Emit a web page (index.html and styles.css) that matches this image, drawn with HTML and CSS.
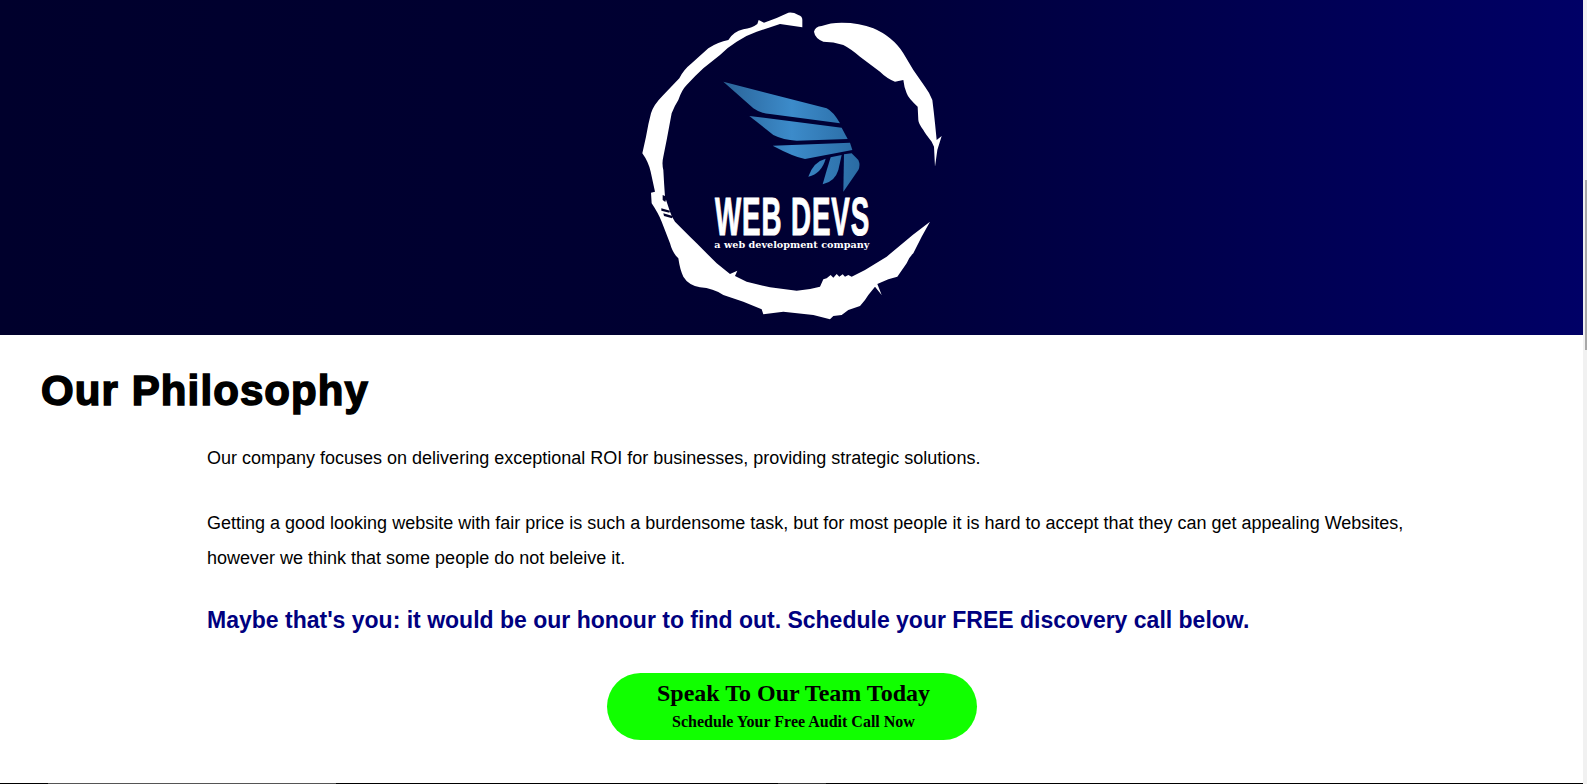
FILE: index.html
```html
<!DOCTYPE html>
<html>
<head>
  <title>Web Devs: Our Philosophy</title>
  <meta charset="UTF-8">
  <link rel="stylesheet" href="styles.css">
</head>
<body>
  <div id="page">
    <header class="hero">
      <svg class="logo" viewBox="0 0 1020 1020" width="340" height="340">
        <defs>
          <linearGradient id="wingFill" x1="310" y1="0" x2="720" y2="0" gradientUnits="userSpaceOnUse">
            <stop offset="0" stop-color="#2a6398"/>
            <stop offset="0.5" stop-color="#3c8bca"/>
            <stop offset="1" stop-color="#2a6ba3"/>
          </linearGradient>
        </defs>
        <path class="ring" d="M547 62Q548 48 535 45Q520 36 505 38L470 54L432 68L416 60L412 72Q395 85 370 88Q340 95 325 120Q295 125 265 145L215 190Q190 210 178 235L130 285Q100 315 93 340Q85 370 78 410L67 460Q85 485 92 515L105 575L93 578L95 610Q115 640 125 665L150 730Q158 760 175 775Q180 810 190 830Q205 855 240 862Q280 865 310 885L370 905L425 928L430 943L490 935L580 945L630 958L640 948L665 945L685 930L720 918L735 900L745 885L765 860L785 885L772 852L805 838L832 830L860 790Q868 770 880 760L905 710L930 665L877 706L870 712L800 770L735 810L695 830L685 825L675 830L668 823L658 830L650 822L640 833L632 825L620 835L610 838L600 860Q565 870 530 872Q490 868 450 862L380 845L345 828L352 812L330 822L290 790L230 730Q190 690 165 665Q155 650 150 635L135 590Q132 550 130 510Q125 490 130 470Q135 445 140 420L155 340Q165 315 175 300Q185 270 200 255Q225 228 250 205L300 165Q325 140 350 125Q380 105 410 95L480 72L547 82Z"/>
        <path class="ring" d="M582 95Q585 80 605 78Q630 68 665 68Q720 68 760 85Q790 98 810 115Q835 135 850 160L880 210L915 260Q930 280 937 300Q942 340 945 370L950 420L965 408L952 450L945 500L942 440L935 425Q915 400 910 390Q895 370 895 360L893 320Q865 295 860 280Q852 260 850 240L825 245Q800 235 780 215L720 170Q690 145 670 135Q640 125 610 125Q585 115 582 95Z"/>
        <path class="notch" d="M128 585L140 590L136 606L128 600ZM124 625L150 632L148 638L124 632ZM130 640L158 648L156 655L132 648Z"/>
        <g fill="url(#wingFill)">
          <path d="M310 245L620 325Q640 335 660 370L450 342Q420 340 400 325Z"/>
          <path d="M388 348L665 383L683 417L530 422Q490 420 460 405Z"/>
          <path d="M458 437L690 428L697 450L555 477Q520 470 458 437Z"/>
          <path d="M617 476Q580 485 565 530Q605 520 617 476Z"/>
          <path d="M665 465L632 472Q620 510 608 553Q645 545 655 510Z"/>
          <path d="M695 460L672 463L670 575L715 510Q722 495 715 480Z"/>
        </g>
        <text class="logo-name" transform="translate(285 705) scale(0.52 1)" textLength="890">WEB DEVS</text>
        <text class="logo-tag" transform="translate(283 745) scale(0.93 1)" textLength="500" lengthAdjust="spacingAndGlyphs">a web development company</text>
      </svg>
    </header>

    <section class="philosophy">
      <h1>Our Philosophy</h1>
      <div class="copy">
        <p>Our company focuses on delivering exceptional ROI for businesses, providing strategic solutions.</p>
        <p>Getting a good looking website with fair price is such a burdensome task, but for most people it is hard to accept that they can get appealing Websites, however we think that some people do not beleive it.</p>
        <h2>Maybe that's you: it would be our honour to find out. Schedule your FREE discovery call below.</h2>
      </div>
      <a class="cta" href="#">
        <span class="cta-main">Speak To Our Team Today</span>
        <span class="cta-sub">Schedule Your Free Audit Call Now</span>
      </a>
    </section>

    <div class="next-section">
      <span class="edge-black edge-short"></span>
      <span class="edge-gray"></span>
      <span class="edge-black edge-mid"></span>
      <span class="edge-dark"></span>
      <span class="edge-black edge-rest"></span>
    </div>
  </div>
  <div class="scrollbar"><div class="scrollbar-thumb"></div></div>
</body>
</html>
```

FILE: styles.css
```css
* {
  box-sizing: border-box;
}

html, body {
  height: 100%;
}

body {
  margin: 0;
  display: flex;
  overflow: hidden;
  font-family: "Liberation Sans", Arial, sans-serif;
  background: #ffffff;
  color: #000000;
}

#page {
  flex: 1;
  display: flex;
  flex-direction: column;
  min-width: 0;
}

.hero {
  height: 335px;
  display: flex;
  justify-content: center;
  background: linear-gradient(90deg, #00002c 0%, #000033 50%, #000066 100%);
}

.logo {
  display: block;
  margin-left: -3px;
}

.ring {
  fill: #ffffff;
}

.notch {
  fill: #00002c;
}

.logo-name {
  font-family: "Liberation Sans", Arial, sans-serif;
  font-weight: 700;
  font-size: 160px;
  fill: #ffffff;
  stroke: #ffffff;
  stroke-width: 3px;
}

.logo-tag {
  font-family: "DejaVu Serif", serif;
  font-weight: 700;
  font-size: 29px;
  fill: #ffffff;
}

.philosophy {
  flex: 1;
  display: flex;
  flex-direction: column;
  padding: 32px 0 0 41px;
}

h1 {
  margin: 0 0 26px 0;
  font-size: 42px;
  line-height: 48px;
  font-weight: 700;
  letter-spacing: 1.1px;
  -webkit-text-stroke: 1.5px #000000;
}

.copy {
  width: 1210px;
  margin-left: 166px;
}

.copy p {
  margin: 0 0 28px 0;
  font-size: 18px;
  line-height: 35px;
}

.copy p:first-child {
  margin-bottom: 30px;
}

.copy h2 {
  margin: 0 0 37px 0;
  font-size: 23px;
  line-height: 32px;
  color: #000080;
}

.cta {
  align-self: flex-start;
  margin-left: 566px;
  width: 370px;
  height: 67px;
  padding-left: 3px;
  padding-bottom: 1px;
  display: flex;
  flex-direction: column;
  align-items: center;
  justify-content: center;
  border-radius: 34px;
  background: #11ff00;
  color: #000000;
  font-family: "Liberation Serif", "Times New Roman", serif;
  font-weight: 700;
  text-decoration: none;
}

.cta-main {
  font-size: 24px;
  line-height: 28px;
  margin-bottom: 3px;
}

.cta-sub {
  font-size: 16px;
  line-height: 24px;
}

.next-section {
  height: 1px;
  display: flex;
}

.edge-black {
  background: #000000;
}

.edge-short {
  width: 48px;
}

.edge-gray {
  width: 288px;
  background: #555555;
}

.edge-mid {
  width: 442px;
}

.edge-dark {
  width: 48px;
  background: #333333;
}

.edge-rest {
  flex: 1;
}

.scrollbar {
  width: 4px;
  position: relative;
  background: #f1f1f1;
}

.scrollbar-thumb {
  position: absolute;
  top: 180px;
  right: 0;
  width: 2px;
  height: 170px;
  background: #a8a8a8;
}
```
